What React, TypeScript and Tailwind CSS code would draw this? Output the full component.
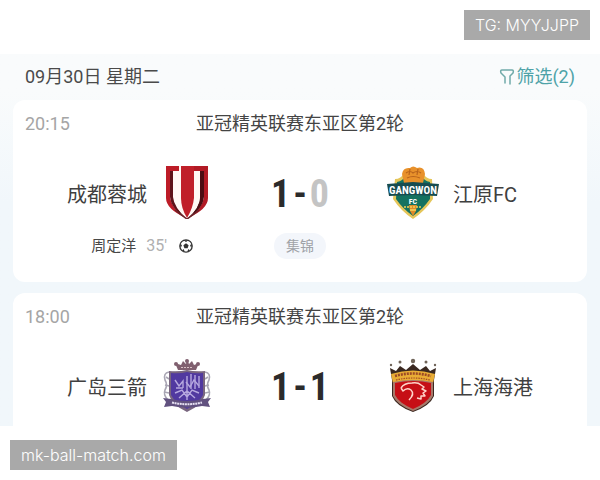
import type { ReactNode } from 'react';
import clsx from 'clsx';

// ---------------------------------------------------------------------------
// Types
// ---------------------------------------------------------------------------

interface Team {
  name: string;
  score: number;
  crest: ReactNode;
  lost?: boolean;
}

interface Match {
  time: string;
  title: string;
  home: Team;
  away: Team;
  scorer?: { name: string; minute: string };
}

// ---------------------------------------------------------------------------
// Crests
// ---------------------------------------------------------------------------

function ChengduCrest() {
  return (
    <svg viewBox="0 0 52 54" className="h-[54px] w-[52px]" aria-hidden="true">
      <path d="M5 1H18V6H9V32Q10 43 25 53Q5 44 5 33Z" fill="#bd1c27" />
      <path d="M32 1H47V33Q47 44 27 53Q42 43 43 32V6H32Z" fill="#b21a25" />
      <path d="M9 6H13V32Q14 43 25 53Q10 44 9 32Z" fill="#5e1218" />
      <path d="M39 6H43V32Q42 44 27 53Q38 43 39 32Z" fill="#4c0d13" />
      <path d="M12 6H18V1H20V33Q20 44 26 53Q13 43 12 32Z" fill="#fff8f4" />
      <path d="M33 6H39V32Q39 43 26 53Q33 43 33 33Z" fill="#fff8f4" />
      <path d="M20 1H33V33Q32 43 26 53Q20 43 20 33Z" fill="#c01f29" />
      <path d="M14 45Q20 50 26 54Q32 50 38 45" fill="none" stroke="#6a2228" strokeWidth="1.500" />
    </svg>
  );
}

function GangwonCrest() {
  return (
    <svg viewBox="0 0 52 54" className="h-[54px] w-[52px]" aria-hidden="true">
      <path d="M8 14Q14 14 17 8H36Q39 14 45 14L46 34Q38 46 26 54Q14 46 6 34Z" fill="#e5c65a" />
      <path d="M10 17Q16 16 19 10H34Q37 16 43 17L43 34Q36 44 26 51Q16 44 9 34Z" fill="#147260" />
      <path d="M22 40H30L29 46L26 51L23 46Z" fill="#e08a28" />
      <path d="M15 9Q16 2 23 3Q26 0 30 3Q37 1 38 9L36 18H17Z" fill="#e8912b" />
      <path d="M19 8Q23 5 26 8Q30 5 34 8M20 13Q26 10 33 13M23 4L22 10M31 4L30 10" fill="none" stroke="#b8641c" strokeWidth="1.200" />
      <path d="M0 19L26 17L52 19L50 31L26 30L2 31Z" fill="#174c50" />
      <text x="26" y="29" textAnchor="middle" fontFamily="Roboto Condensed, Roboto, sans-serif" fontWeight="700" fontSize="11" fill="#fff">
        GANGWON
      </text>
      <text x="26" y="39" textAnchor="middle" fontFamily="Roboto Condensed, Roboto, sans-serif" fontWeight="700" fontSize="8" fill="#fff">
        FC
      </text>
      <path d="M17 42H35" stroke="#f2cf55" strokeWidth="1.600" strokeDasharray="2 1" />
      <path d="M23 45H29" stroke="#f6d45e" strokeWidth="1.500" />
    </svg>
  );
}

function HiroshimaCrest() {
  return (
    <svg viewBox="0 0 52 54" className="h-[54px] w-[52px]" aria-hidden="true">
      <g fill="none" stroke="#a9a6b4" strokeWidth="1.600">
        <path d="M8 14Q2 15 4 22Q7 27 4 32Q2 37 7 42" />
        <path d="M44 14Q50 15 48 22Q45 27 48 32Q50 37 45 42" />
        <path d="M5 19L8 21M4 27L8 28M3 34L8 35M47 19L44 21M48 27L44 28M49 34L44 35" />
      </g>
      <path d="M17 12L14 5L20 7L22 3L25 6L26 1L28 6L31 3L33 7L38 5L35 12Z" fill="#80606f" />
      <circle cx="15" cy="6" r="2" fill="#80606f" />
      <circle cx="37" cy="6" r="2" fill="#80606f" />
      <circle cx="26" cy="3" r="2" fill="#80606f" />
      <path d="M20 9.500H32" stroke="#d8bfc4" strokeWidth="1" strokeDasharray="2 1" />
      <path d="M8 13Q18 14 26 12Q34 14 44 13V37Q41 47 26 54Q11 47 8 37Z" fill="#79667f" />
      <path d="M10 15Q19 16 26 14Q33 16 42 15V37Q38 45 26 51Q14 45 10 37Z" fill="#5139a0" />
      <g fill="none" stroke="#b6a8df" strokeWidth="1.400">
        <path d="M14 22L18 28L22 23V30M15 30H22" />
        <path d="M26 18V31M30 16V31M34 17V31M38 18V30" />
        <path d="M25 24L29 29L33 22L38 28" />
        <path d="M14 35L21 32L26 39L31 32L38 35M26 31V42M18 40L26 33L34 40" />
      </g>
      <path d="M2 40L10 41Q26 45 42 41L50 40L47 44L49 49L41 48Q26 51 11 48L3 49L5 44Z" fill="#61517f" />
      <path d="M11 44.500Q26 48 41 44.500" fill="none" stroke="#e6e0f2" strokeWidth="2" strokeDasharray="2 .6" />
    </svg>
  );
}

function ShanghaiCrest() {
  return (
    <svg viewBox="0 0 52 54" className="h-[54px] w-[52px]" aria-hidden="true">
      <g fill="#6f6459">
        <circle cx="4" cy="7" r="1.200" />
        <circle cx="13" cy="4" r="1.500" />
        <circle cx="26" cy="3" r="2.200" />
        <circle cx="39" cy="4" r="1.500" />
        <circle cx="48" cy="7" r="1.200" />
      </g>
      <path d="M3 10L9 13L13 8L19 12L26 6L33 12L39 8L43 13L49 10L47 22V38Q43 48 26 54Q9 48 5 38V22Z" fill="#3a2820" />
      <path d="M4 16Q26 9 48 16L46 25H6Z" fill="#e9ad35" />
      <path d="M8 18Q26 13 44 18" fill="none" stroke="#9c4a26" strokeWidth="2.600" strokeDasharray="2 1" />
      <path d="M9 22Q26 18 43 22" fill="none" stroke="#a44d24" strokeWidth="1.200" strokeDasharray="1.500 1" />
      <path d="M6 24Q26 20 46 24V38Q42 47 26 53Q10 47 6 38Z" fill="#a8796a" />
      <path d="M8 25Q26 21 44 25V37Q40 45 26 51Q12 45 8 37Z" fill="#c60f16" />
      <path
        d="M14 30Q17 25 25 25Q31 24 34 27L37 29L35 31L39 33L36 35L38 38L34 38L34 41L30 40M14 30L16 33Q20 29 24 32Q28 36 22 42"
        fill="none"
        stroke="#ffd6cb"
        strokeWidth="1.500"
        strokeLinejoin="round"
      />
    </svg>
  );
}

// ---------------------------------------------------------------------------
// Small icons
// ---------------------------------------------------------------------------

function FilterIcon() {
  return (
    <svg viewBox="0 0 16 16" className="h-4 w-4" fill="none" stroke="#70aaa9" strokeWidth="1.500" strokeLinejoin="round" strokeLinecap="round" aria-hidden="true">
      <path d="M6 14V8L2 4Q1 1 3 1H13Q15 1 14 4L11 7V15" />
    </svg>
  );
}

function BallIcon() {
  return (
    <svg viewBox="0 0 14 14" className="h-3.5 w-3.5" aria-label="进球">
      <circle cx="7" cy="7" r="6.200" fill="#fff" stroke="#333" strokeWidth="1.300" />
      <path d="M7 4.300L9.600 6.200L8.600 9.300H5.400L4.400 6.200Z" fill="#333" />
      <path d="M4.500 1.200H9.500L7 3ZM.8 5L3 6L1.800 9ZM13.200 5L11 6L12.200 9ZM3 11.500L4.500 10L6 13ZM11 11.500L9.500 10L8 13Z" fill="#333" />
    </svg>
  );
}

// ---------------------------------------------------------------------------
// Match card
// ---------------------------------------------------------------------------

function Score({ home, away }: { home: Team; away: Team }) {
  return (
    <div className="flex items-center justify-center gap-[3px] pt-1 font-['Roboto_Condensed','Roboto',sans-serif] text-[38px] leading-10 font-bold text-[#2b2b2b]">
      <span className={clsx(home.lost && 'text-[#c4c4c4]')}>{home.score}</span>
      <span>-</span>
      <span className={clsx(away.lost && 'text-[#c4c4c4]')}>{away.score}</span>
    </div>
  );
}

function MatchCard({ match, last }: { match: Match; last?: boolean }) {
  const { time, title, home, away, scorer } = match;

  return (
    <article className={clsx('bg-white pt-3', last ? 'rounded-t-xl pb-3.5' : 'rounded-xl pb-[23px]')}>
      <div className="grid grid-cols-[1fr_auto_1fr] items-center px-3 text-lg leading-6">
        <time className="text-[#a5a5a5]">{time}</time>
        <h2 className="text-[#444]">{title}</h2>
      </div>

      <div className="mt-[29px] grid grid-cols-[1fr_174px_1fr] items-center text-xl leading-7 text-[#404040]">
        <div className="flex items-center justify-end gap-3.5">
          <span className="pt-1.5">{home.name}</span>
          {home.crest}
        </div>
        <Score home={home} away={away} />
        <div className="flex items-center gap-3.5">
          {away.crest}
          <span className="pt-1.5">{away.name}</span>
        </div>
      </div>

      {scorer && (
        <div className="mt-3.5 grid grid-cols-[1fr_174px_1fr] items-center">
          <div className="flex items-center justify-end pr-5 text-[15px] leading-6">
            <span className="text-[#484848]">{scorer.name}</span>
            <span className="mr-3 ml-2.5 text-base text-[#b0b0b0]">{scorer.minute}</span>
            <BallIcon />
          </div>
          <button type="button" className="justify-self-center rounded-full bg-[#f3f6fb] px-3 text-sm leading-[26px] text-[#a0a3a8]">
            集锦
          </button>
        </div>
      )}
    </article>
  );
}

// ---------------------------------------------------------------------------
// Page
// ---------------------------------------------------------------------------

const MATCHES: Match[] = [
  {
    time: '20:15',
    title: '亚冠精英联赛东亚区第2轮',
    home: { name: '成都蓉城', score: 1, crest: <ChengduCrest /> },
    away: { name: '江原FC', score: 0, crest: <GangwonCrest />, lost: true },
    scorer: { name: '周定洋', minute: "35'" },
  },
  {
    time: '18:00',
    title: '亚冠精英联赛东亚区第2轮',
    home: { name: '广岛三箭', score: 1, crest: <HiroshimaCrest /> },
    away: { name: '上海海港', score: 1, crest: <ShanghaiCrest /> },
  },
];

function Tag({ children }: { children: ReactNode }) {
  return (
    <p className="bg-[#a9a9a9] px-[11px] font-['Inter',sans-serif] text-base leading-[30px] font-light text-white">
      {children}
    </p>
  );
}

export default function App() {
  return (
    <div className="min-h-screen bg-white font-['Roboto','Noto_Sans_CJK_SC',sans-serif]">
      <div className="flex justify-end px-2.5 pt-2.5 pb-3.5">
        <Tag>TG: MYYJJPP</Tag>
      </div>

      <main className="bg-linear-to-b from-[#f9fbfc] from-10% to-[#f1f7fb] to-40% px-[13px]">
        <header className="flex h-[46px] items-center justify-between px-3 text-lg leading-6">
          <h1 className="text-[#4a4a4a]">09月30日 星期二</h1>
          <button type="button" className="flex items-center gap-px text-[#4fa3a8]">
            <FilterIcon />
            筛选(2)
          </button>
        </header>

        <div className="flex flex-col gap-[11px]">
          {MATCHES.map((match, i) => (
            <MatchCard key={match.time} match={match} last={i === MATCHES.length - 1} />
          ))}
        </div>
      </main>

      <footer className="flex px-2.5 py-3.5">
        <Tag>mk-ball-match.com</Tag>
      </footer>
    </div>
  );
}
